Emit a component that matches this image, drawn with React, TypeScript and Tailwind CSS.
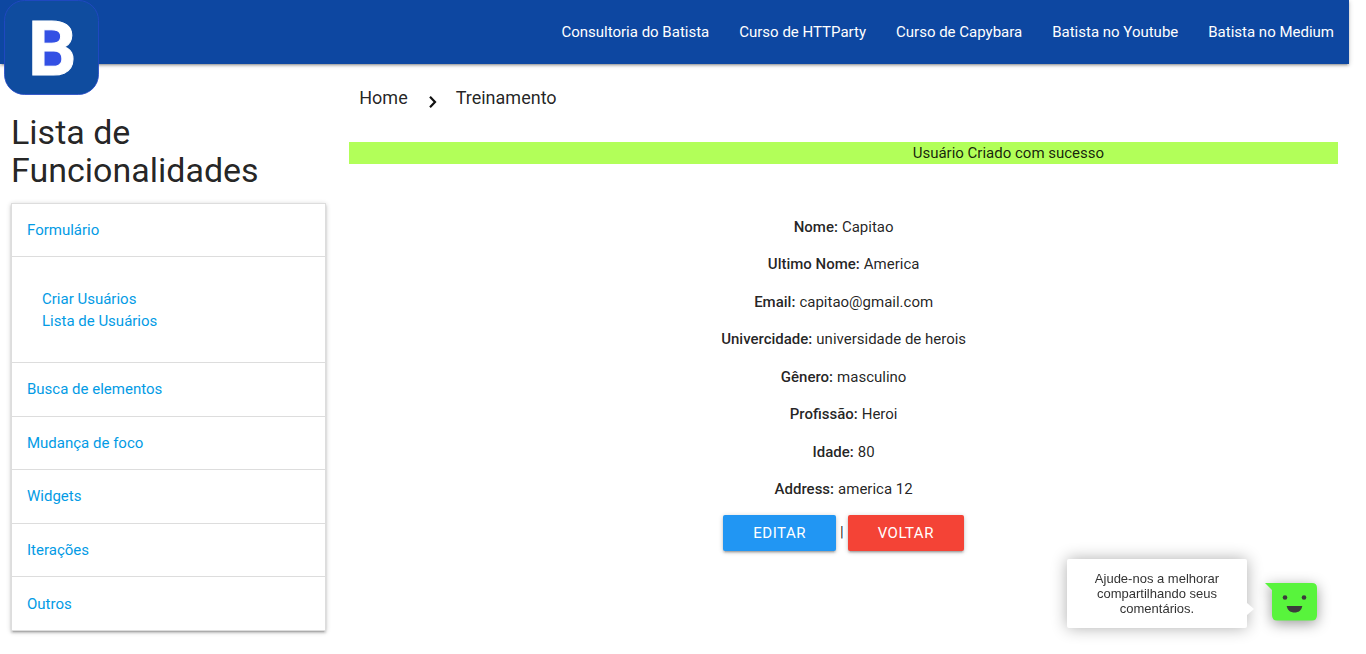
import React from "react";

const navLinks = [
  "Consultoria do Batista",
  "Curso de HTTParty",
  "Curso de Capybara",
  "Batista no Youtube",
  "Batista no Medium",
];

const sections = ["Busca de elementos", "Mudança de foco", "Widgets", "Iterações", "Outros"];

const details = [
  ["Nome", "Capitao"],
  ["Ultimo Nome", "America"],
  ["Email", "capitao@gmail.com"],
  ["Univercidade", "universidade de herois"],
  ["Gênero", "masculino"],
  ["Profissão", "Heroi"],
  ["Idade", "80"],
  ["Address", "america 12"],
];

const materialShadow =
  "shadow-[0_2px_2px_0_rgba(0,0,0,0.14),0_3px_1px_-2px_rgba(0,0,0,0.12),0_1px_5px_0_rgba(0,0,0,0.2)]";

function Logo() {
  return (
    <svg width="95" height="96" viewBox="0 0 95 96" role="img" aria-label="Batista">
      <rect x="0.5" y="0.5" width="94" height="94" rx="20" fill="#0f4c9f" stroke="#2448c8" strokeWidth="0.8" />
      <rect x="34" y="25" width="25" height="45" fill="#3350e4" />
      <text
        x="24"
        y="74.5"
        fontFamily="Roboto, sans-serif"
        fontWeight="700"
        fontSize="76"
        fill="#fff"
        stroke="#fff"
        strokeWidth="1"
      >
        B
      </text>
    </svg>
  );
}

function Header() {
  return (
    <header className={`relative flex h-16 justify-end bg-[#0d47a1] ${materialShadow}`}>
      <a href="#inicio" className="absolute left-1 top-0">
        <Logo />
      </a>
      <nav className="flex">
        {navLinks.map((label) => (
          <a key={label} href="#link" className="px-[15px] leading-[64px] text-white">
            {label}
          </a>
        ))}
      </nav>
    </header>
  );
}

function Sidebar() {
  return (
    <aside className="w-1/4 px-[11px] pt-[49px]">
      <h1 className="text-[34px] leading-[38px]">Lista de Funcionalidades</h1>
      <nav className={`mt-[14px] border border-b-0 border-[#ddd] text-[#039be5] ${materialShadow}`}>
        <a href="#formulario" className="flex h-[53px] items-center border-b border-[#ddd] px-[15px]">
          Formulário
        </a>
        <ul className="border-b border-[#ddd] px-[30px] pt-[31px] pb-[30px] leading-[22px]">
          <li>
            <a href="#criar">Criar Usuários</a>
          </li>
          <li>
            <a href="#lista">Lista de Usuários</a>
          </li>
        </ul>
        <ul className="grid h-67 auto-rows-fr">
          {sections.map((label) => (
            <li key={label} className="border-b border-[#ddd]">
              <a href="#secao" className="flex h-full items-center px-[15px]">
                {label}
              </a>
            </li>
          ))}
        </ul>
      </nav>
    </aside>
  );
}

function Content() {
  return (
    <main className="w-3/4 pl-3 pr-[11px]">
      <nav className="flex h-[68px] items-center pl-[10px] text-[18px]">
        <a href="#home">Home</a>
        <svg className="mx-[18px] mt-2" width="12" height="14" viewBox="0 0 12 14" aria-hidden="true">
          <path d="M4 1.8 L9 7 L4 12.2" fill="none" stroke="#111" strokeWidth="2.2" />
        </svg>
        <a href="#treinamento">Treinamento</a>
      </nav>
      <p className="mt-[10px] bg-[#b2ff59] pl-[33.333%] text-center leading-[22px]">
        Usuário Criado com sucesso
      </p>
      <div className="mt-11 grid h-75 auto-rows-fr text-center">
        {details.map(([label, value]) => (
          <p key={label} className="flex items-center justify-center gap-1">
            <strong className="font-medium">{label}:</strong>
            <span>{value}</span>
          </p>
        ))}
      </div>
      <div className="mt-[7px] flex justify-center gap-1">
        <button className={`h-9 rounded-xs bg-[#2196f3] px-[30px] tracking-[0.5px] text-white ${materialShadow}`}>
          EDITAR
        </button>
        <span className="leading-[34px]">|</span>
        <button className={`h-9 rounded-xs bg-[#f44336] px-[30px] tracking-[0.5px] text-white ${materialShadow}`}>
          VOLTAR
        </button>
      </div>
    </main>
  );
}

function Feedback() {
  return (
    <aside className="fixed bottom-[26px] right-12 flex items-center gap-[18px]">
      <p className="relative w-[180px] rounded-xs bg-white px-5 py-3 text-center font-['Liberation_Sans',Arial,sans-serif] text-[13px] leading-[15px] text-[#333] shadow-[0_0_16px_rgba(0,0,0,0.32)]">
        Ajude-nos a melhorar compartilhando seus comentários.
        <svg className="absolute left-full top-11" width="7" height="12" viewBox="0 0 7 12" aria-hidden="true">
          <path d="M0 0 L7 6 L0 12Z" fill="#fff" />
        </svg>
      </p>
      <button aria-label="Enviar comentários" className="mt-4">
        <svg
          className="overflow-visible drop-shadow-[0_3px_7px_rgba(0,0,0,0.4)]"
          width="53"
          height="38"
          viewBox="0 0 53 38"
          aria-hidden="true"
        >
          <path d="M0 0 H47 Q52 0 52 5 V32 Q52 37.5 47 37.5 H12 Q7 37.5 7 32 V7Z" fill="#58f43c" />
          <circle cx="20" cy="14.5" r="2.3" fill="#3b3b3b" />
          <circle cx="39" cy="14.5" r="2.3" fill="#3b3b3b" />
          <path d="M21.7 23 H37.3 C36.5 27.5 33.5 29.5 29.5 29.5 S22.5 27.5 21.7 23Z" fill="#3b3b3b" />
        </svg>
      </button>
    </aside>
  );
}

export default function App() {
  return (
    <div className="bg-white pr-[17px] pb-6 font-[Roboto,sans-serif] text-[15px] leading-[22px] text-black/87">
      <Header />
      <div className="flex">
        <Sidebar />
        <Content />
      </div>
      <Feedback />
    </div>
  );
}
